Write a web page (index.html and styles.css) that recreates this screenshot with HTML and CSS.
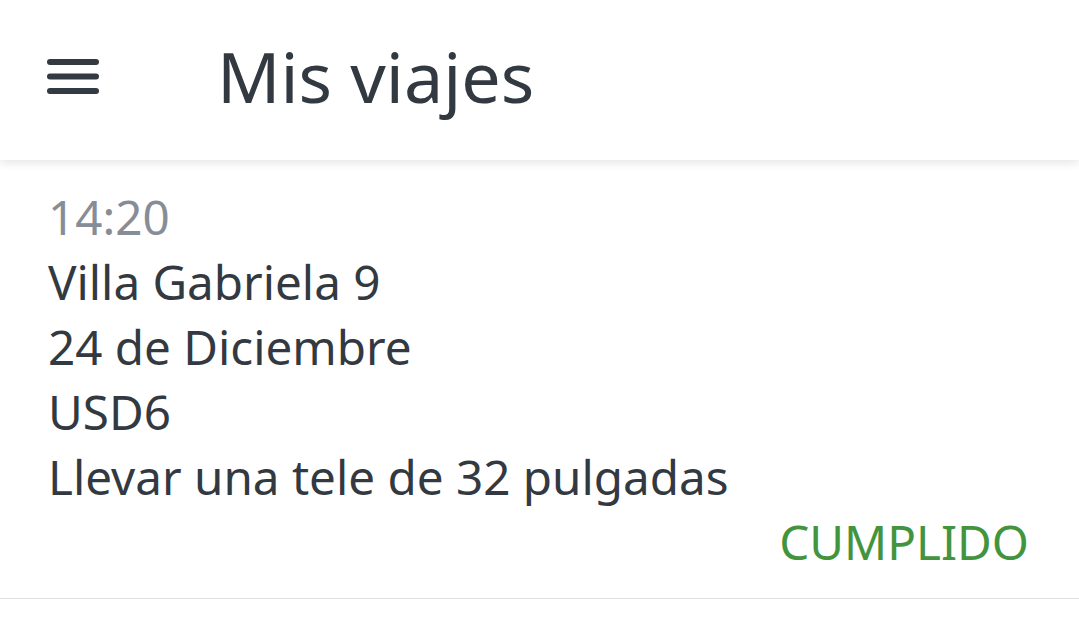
FILE: index.html
```html
<!DOCTYPE html>
<html lang="es">
<head>
  <meta charset="UTF-8">
  <title>Mis viajes</title>
  <link rel="stylesheet" href="styles.css">
</head>
<body>
  <header class="app-bar">
    <button class="menu-btn" aria-label="Menú">
      <svg width="52" height="36" viewBox="0 0 52 36">
        <g stroke="#343a42" stroke-width="6" stroke-linecap="round">
          <line x1="3" y1="4" x2="49" y2="4"/>
          <line x1="3" y1="18.5" x2="49" y2="18.5"/>
          <line x1="3" y1="33" x2="49" y2="33"/>
        </g>
      </svg>
    </button>
    <h1 class="title">Mis viajes</h1>
  </header>

  <div class="trip">
    <div class="trip-time">14:20</div>
    <div>Villa Gabriela 9</div>
    <div>24 de Diciembre</div>
    <div>USD6</div>
    <div>Llevar una tele de 32 pulgadas</div>
    <div class="trip-status">CUMPLIDO</div>
  </div>
</body>
</html>
```

FILE: styles.css
```css
body {
  margin: 0;
  font-family: "Noto Sans", "Open Sans", sans-serif;
  background-color: #ffffff;
  color: #333941;
}

.app-bar {
  display: flex;
  align-items: center;
  height: 160px;
  background-color: #ffffff;
  box-shadow: 0 2px 10px rgba(0,0,0,0.12);
  position: relative;
}

.menu-btn {
  background: none;
  border: none;
  padding: 0;
  margin: 0 118px 8px 47px;
  display: flex;
}

.title {
  margin: 0;
  font-size: 70px;
  font-weight: 400;
  line-height: 1;
  padding-bottom: 8px;
}

.trip {
  padding: 24px 50px 24px 48px;
  font-size: 47.6px;
  line-height: 65px;
  border-bottom: 1px solid #e0e0e0;
}

.trip-time {
  color: #878d96;
}

.trip-status {
  text-align: right;
  color: #43943e;
}
```
